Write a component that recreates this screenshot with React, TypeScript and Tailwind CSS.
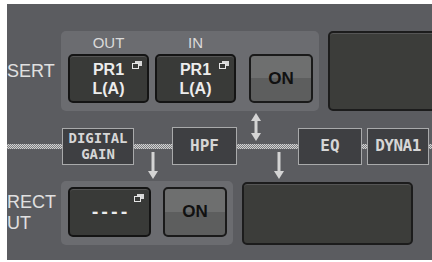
import React from "react";

const WinIcon = () => (
    <svg className="absolute right-[5px] top-[5px]" width="10" height="8" viewBox="0 0 10 8">
        <rect x="3" y="0" width="7" height="5" fill="#d8d8d8" />
        <rect x="0.5" y="2.5" width="6" height="5" fill="#393a38" stroke="#e6e6e6" />
    </svg>
);

const DarkBtn = ({ w, children }: { w: string; children: React.ReactNode }) => (
    <div
        className={`relative flex shrink-0 flex-col items-center justify-center rounded-[5px] border-2 border-[#141414] bg-[#393a38] shadow-[inset_0_1px_0_#555] ${w}`}
    >
        <WinIcon />
        {children}
    </div>
);

const OnBtn = ({ h }: { h: string }) => (
    <div
        className={`flex w-[64px] items-center justify-center rounded-[5px] border-2 border-[#1a1a1a] bg-[linear-gradient(#6e6f6f_0_50%,#5d5e5e_50%_100%)] text-[17px] font-bold text-[#111] ${h}`}
    >
        ON
    </div>
);

const Line = () => (
    <div className="h-[5px] w-full bg-[image:repeating-conic-gradient(#d2d2d2_0_25%,#7d7e81_0_50%)] bg-[length:2px_2px]" />
);

const DownArrow = () => (
    <svg width="10" height="27" viewBox="0 0 10 27">
        <rect x="3.5" y="0" width="3" height="20" fill="#d4d4d4" />
        <polygon points="0,19 10,19 5,27" fill="#d4d4d4" />
    </svg>
);

const UpDownArrow = () => (
    <svg width="10" height="28" viewBox="0 0 10 28">
        <polygon points="5,0 10,8 0,8" fill="#d4d4d4" />
        <rect x="3.5" y="7" width="3" height="14" fill="#d4d4d4" />
        <polygon points="0,20 10,20 5,28" fill="#d4d4d4" />
    </svg>
);

// one piece of the signal line, with optional arrows above and below
const Segment = ({
    w,
    top,
    bottom,
}: {
    w: string;
    top?: React.ReactNode;
    bottom?: React.ReactNode;
}) => (
    <div className={`grid shrink-0 grid-rows-[33px_5px_32px] ${w}`}>
        <div className="flex">{top}</div>
        <Line />
        <div className="flex">{bottom}</div>
    </div>
);

const Block = ({ w, children }: { w: string; children: React.ReactNode }) => (
    <div
        className={`flex h-[37px] shrink-0 flex-col items-center justify-center self-center border border-[#a9aaab] bg-[#3e3f42] font-['DejaVu_Sans_Mono',monospace] font-bold text-[#d6d6d6] ${w}`}
    >
        {children}
    </div>
);

export default function App() {
    return (
        <div className="h-[262px] w-[432px] overflow-hidden bg-white pl-[7px] pt-[4px]">
            <div className="h-[256px] overflow-hidden bg-[#5b5c60] pt-[27px] font-['Liberation_Sans',Arial,sans-serif]">
                {/* insert */}
                <div className="flex h-[80px]">
                    <div className="flex w-[54px] shrink-0 items-center">
                        <span className="whitespace-nowrap text-[18px] text-[#e0e0e0]">SERT</span>
                    </div>
                    <div className="flex w-[258px] shrink-0 rounded-[5px] bg-[#6b6c70] pl-[7px] pt-[5px]">
                        <div className="flex w-[81px] flex-col items-center">
                            <span className="h-[14px] text-[15px] leading-[14px] text-[#dadada]">OUT</span>
                            <DarkBtn w="mt-[4px] h-[49px] w-[81px]">
                                <div className="text-center text-[16px] font-bold leading-[19px] text-[#ececec]">
                                    PR1
                                    <br />
                                    L(A)
                                </div>
                            </DarkBtn>
                        </div>
                        <div className="ml-[6px] flex w-[81px] flex-col items-center">
                            <span className="h-[14px] text-[15px] leading-[14px] text-[#dadada]">IN</span>
                            <DarkBtn w="mt-[4px] h-[49px] w-[81px]">
                                <div className="text-center text-[16px] font-bold leading-[19px] text-[#ececec]">
                                    PR1
                                    <br />
                                    L(A)
                                </div>
                            </DarkBtn>
                        </div>
                        <div className="ml-[13px] pt-[18px]">
                            <OnBtn h="h-[49px]" />
                        </div>
                    </div>
                    <div className="ml-[9px] h-[80px] w-[130px] shrink-0 rounded-[5px] border-2 border-[#1c1c1c] bg-[#3c3d3a] shadow-[inset_0_1px_0_#555]" />
                </div>

                {/* signal line */}
                <div className="flex h-[70px]">
                    <Segment w="w-[55px]" />
                    <Block w="w-[72px]">
                        <span className="text-[14px] leading-[16px]">DIGITAL</span>
                        <span className="text-[14px] leading-[16px]">GAIN</span>
                    </Block>
                    <Segment
                        w="w-[38px]"
                        bottom={
                            <div className="pl-[14px] pt-[3px]">
                                <DownArrow />
                            </div>
                        }
                    />
                    <Block w="w-[65px] h-[38px]">
                        <span className="text-[16px]">HPF</span>
                    </Block>
                    <Segment
                        w="w-[61px]"
                        top={
                            <div className="pl-[14px] pt-[2px]">
                                <UpDownArrow />
                            </div>
                        }
                        bottom={
                            <div className="pl-[37px] pt-[3px]">
                                <DownArrow />
                            </div>
                        }
                    />
                    <Block w="w-[64px]">
                        <span className="text-[16px]">EQ</span>
                    </Block>
                    <Segment w="w-[5px]" />
                    <Block w="w-[62px]">
                        <span className="text-[16px] tracking-[-0.5px]">DYNA1</span>
                    </Block>
                    <Segment w="flex-1" />
                </div>

                {/* direct out */}
                <div className="flex h-[64px]">
                    <div className="flex w-[54px] shrink-0 items-center">
                        <div className="whitespace-nowrap text-[18px] leading-[21px] text-[#e0e0e0]">
                            RECT
                            <br />
                            UT
                        </div>
                    </div>
                    <div className="flex w-[172px] shrink-0 rounded-[5px] bg-[#6b6c70] pl-[7px] pt-[6px]">
                        <DarkBtn w="h-[50px] w-[83px]">
                            <span className="font-['DejaVu_Sans_Mono',monospace] text-[16px] font-bold text-[#ececec]">----</span>
                        </DarkBtn>
                        <div className="ml-[12px]">
                            <OnBtn h="h-[50px]" />
                        </div>
                    </div>
                    <div className="ml-[9px] mt-[1px] h-[63px] w-[171px] shrink-0 rounded-[5px] border-2 border-[#1c1c1c] bg-[#3c3d3a] shadow-[inset_0_1px_0_#555]" />
                </div>
            </div>
        </div>
    );
}
